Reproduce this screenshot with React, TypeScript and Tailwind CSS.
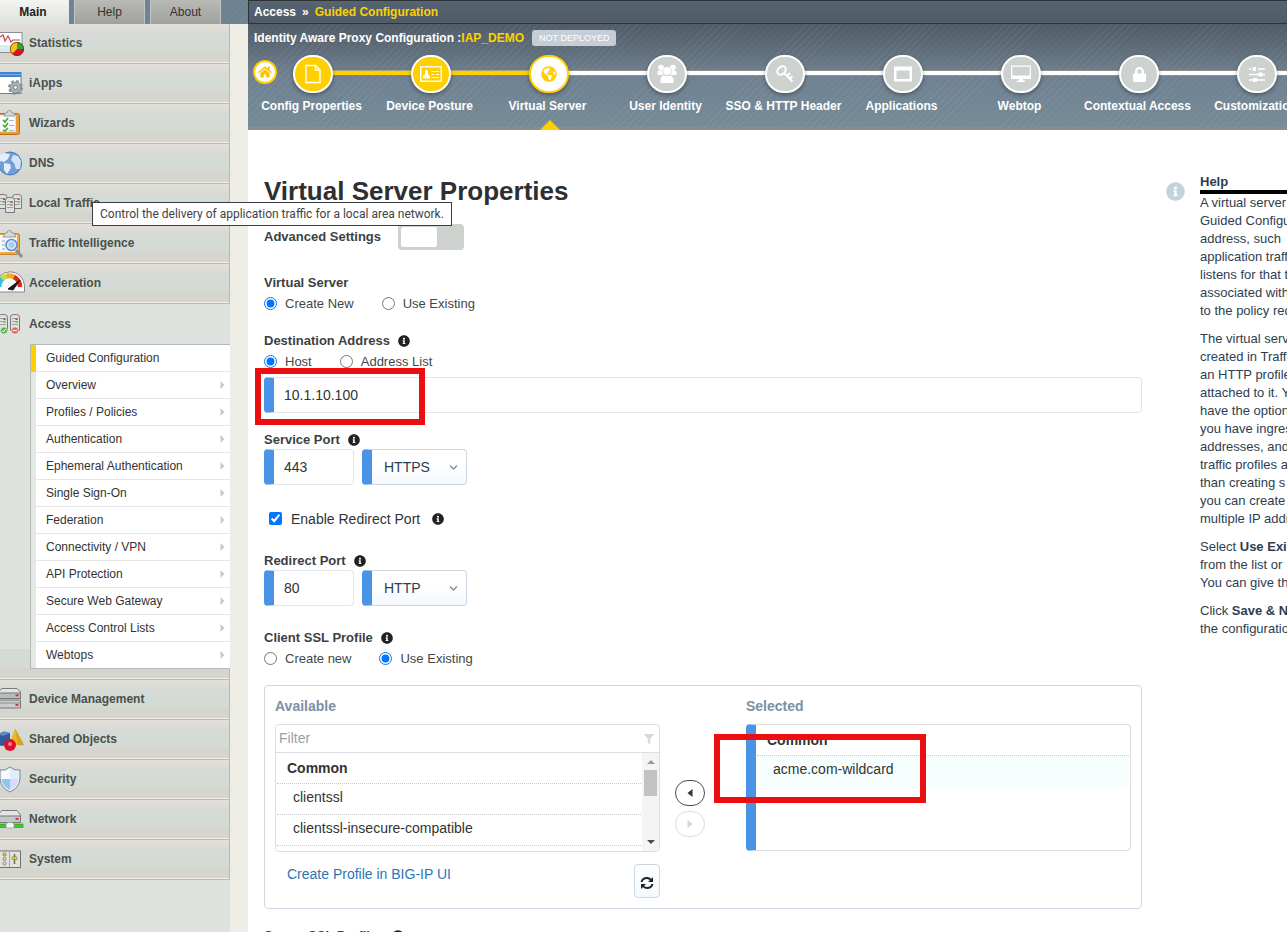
import { useState } from "react";
import type { ReactNode } from "react";
import {
  FaChevronDown,
  FaFilter,
  FaGlobeAmericas,
  FaHome,
  FaInfoCircle,
  FaLock,
} from "react-icons/fa";

/* ---------- Sidebar icons (25 x 40 artboard, one per row) ---------- */

function SideIcon({ children }: { children: ReactNode }) {
  return (
    <svg width="25" height="40" viewBox="0 0 25 40" className="shrink-0" aria-hidden="true">
      {children}
    </svg>
  );
}

const StatisticsIcon = () => (
  <SideIcon>
    <rect x="-2" y="9.5" width="24" height="20" fill="#fff" stroke="#8a8f94" />
    <rect x="-2" y="22" width="23" height="7" fill="#dce9f5" />
    <path d="M0 14 L3 12 L5 18 L8 13 L11 19 L13 17 H20" fill="none" stroke="#c8474b" strokeWidth="1.2" />
    <circle cx="17" cy="26" r="7" fill="#d8112c" />
    <path d="M17 26 V19 A7 7 0 0 1 24 26 Z" fill="#2fa834" />
    <path d="M17 26 L12 31 A7 7 0 0 1 17 19 Z" fill="#f5c518" />
    <circle cx="17" cy="26" r="6.6" fill="none" stroke="#6b2b22" strokeWidth=".7" />
  </SideIcon>
);

const IAppsIcon = () => (
  <SideIcon>
    <rect x="-2" y="9.5" width="23" height="21" fill="#fff" stroke="#6f7d8a" />
    <rect x="-2" y="9" width="23" height="5" fill="#3f83cc" />
    <rect x="-2" y="11" width="23" height="1" fill="#76aee4" />
    <circle cx="15.500" cy="24.500" r="6.500" fill="none" stroke="#8b9499" strokeWidth="2" strokeDasharray="2.6 2.500" />
    <circle cx="15.500" cy="24.500" r="5.500" fill="#a9b2b6" stroke="#7d868c" />
    <circle cx="15.500" cy="24.500" r="2" fill="#eef1f2" stroke="#727c82" />
  </SideIcon>
);

const WizardsIcon = () => (
  <SideIcon>
    <rect x="-3" y="10.500" width="22.500" height="21" rx="2" fill="#f09a2e" stroke="#b96d17" />
    <rect x="-1" y="12" width="17" height="17" fill="#f7f9fc" stroke="#c9b089" strokeWidth=".6" />
    <path d="M4 13 L5 10 H7 A2.500 2.500 0 0 1 12 10 H14 L15 13 Z" fill="#d6d9db" stroke="#85898c" strokeWidth=".8" />
    <path d="M3 17 l2 2 l3 -4 M3 22 l2 2 l3 -4 M3 27 l2 1 l3 -3" fill="none" stroke="#3fae2a" strokeWidth="1.700" />
    <path d="M9 17.500 h5 M9 22.500 h5 M9 27.500 h5" stroke="#a9b7cf" />
  </SideIcon>
);

const DnsIcon = () => (
  <SideIcon>
    <circle cx="10" cy="20.500" r="11.500" fill="#6f9ed8" stroke="#4a78b5" />
    <path d="M-2 13 L4 10 L10 11 L8 16 L4 19 L1 18 L-2 20 Z" fill="#e3eefb" />
    <path d="M4 20 L10 21 L11 25 L7 31 L4 27 Z" fill="#e3eefb" />
    <path d="M13 12 L18 13 L21 18 L20 26 L16 26 L14 20 L11 17 Z" fill="#d3e4f8" />
  </SideIcon>
);

const Tower = ({ x, y, h = 16 }: { x: number; y: number; h?: number }) => (
  <g>
    <path d={`M${x} ${y + 3} Q${x} ${y} ${x + 3} ${y} H${x + 6} Q${x + 9} ${y} ${x + 9} ${y + 3} V${y + h} H${x} Z`} fill="#dfe0df" stroke="#77797a" />
    <path d={`M${x + 1.5} ${y + 4} h6 M${x + 1.5} ${y + 7} h6 M${x + 1.5} ${y + 10} h6`} stroke="#a0a3a4" />
    <rect x={x + 5} y={y + 4} width="2" height="1.500" fill="#e02b2b" />
    <rect x={x + 5} y={y + 7} width="2" height="1.500" fill="#67c54b" />
  </g>
);

const LocalTrafficIcon = () => (
  <SideIcon>
    <Tower x={-2} y={11.5} h={14} />
    <Tower x={12.5} y={11.5} h={14} />
    <Tower x={5.5} y={14.5} h={15} />
  </SideIcon>
);

const TrafficIntelligenceIcon = () => (
  <SideIcon>
    <rect x="-3" y="10.500" width="22.500" height="21" rx="2" fill="#f4a840" stroke="#c58230" />
    <rect x="-1" y="12" width="18" height="17" fill="#f5f8fb" />
    <path d="M3 14 L5 10 H7 A2.500 2.500 0 0 1 12 10 H14 L16 14 Z" fill="#d6d9db" stroke="#85898c" strokeWidth=".8" />
    <path d="M2 18 h3 M2 22 h3 M2 26 h3" stroke="#7aa7d6" />
    <path d="M16 27 L22 34" stroke="#8d9194" strokeWidth="3" />
    <circle cx="11.500" cy="22" r="5.500" fill="#d6e8fa" stroke="#5b92d1" strokeWidth="1.600" />
    <circle cx="11.500" cy="22" r="3" fill="#a6cbf0" />
  </SideIcon>
);

const AccelerationIcon = () => (
  <SideIcon>
    <path d="M-4 29 V23 A14 14 0 0 1 24.500 23 V29 Z" fill="#fbfbfb" stroke="#85898c" />
    <path d="M-1 24 A11 11 0 0 1 3 15" fill="none" stroke="#35c1d8" strokeWidth="5" />
    <path d="M2 16 A11 11 0 0 1 8 13" fill="none" stroke="#c8d93c" strokeWidth="5" />
    <path d="M7 13 A11 11 0 0 1 15 14.500" fill="none" stroke="#f4a91f" strokeWidth="5" />
    <path d="M14 14 A11 11 0 0 1 20 24" fill="none" stroke="#e3261d" strokeWidth="4.500" />
    <path d="M8 26 L20 17 L13 27 Z" fill="#1a1a1a" stroke="#1a1a1a" />
  </SideIcon>
);

const AccessIcon = () => (
  <SideIcon>
    <Tower x={-1.5} y={10.5} h={16} />
    <Tower x={10.5} y={10.5} h={16} />
    <circle cx="4" cy="26.500" r="3.500" fill="#57b54c" stroke="#e9f6e6" strokeWidth=".6" />
    <path d="M2.500 26.500 l1 1.500 l2 -3" fill="none" stroke="#fff" />
    <circle cx="15" cy="26.500" r="3.500" fill="#ea5b50" stroke="#fbe7e5" strokeWidth=".6" />
    <path d="M13 26.500 h4" stroke="#fff" strokeWidth="1.300" />
  </SideIcon>
);

const DeviceIcon = () => (
  <SideIcon>
    <path d="M-3 14 L2 9.500 H17 L20.500 13 V19.500 H-3 Z" fill="#e3e4e4" stroke="#77797a" />
    <rect x="-3" y="14" width="23.500" height="5.500" fill="#b9bcbd" stroke="#77797a" />
    <path d="M-3 21 H20.500 V29 H-3 Z" fill="#c9cbcc" stroke="#77797a" />
    <path d="M-3 24 H20" stroke="#8d9091" />
    <rect x="15.500" y="15.500" width="3" height="1.800" fill="#e02b2b" />
    <rect x="15.500" y="25" width="3" height="1.800" fill="#e02b2b" />
  </SideIcon>
);

const SharedIcon = () => (
  <SideIcon>
    <path d="M-2 15 L4 12.500 L10 14 V25 L2 27 L-2 26 Z" fill="#31599f" />
    <path d="M-2 15 L4 12.500 L10 14 L3 17 Z" fill="#6288c6" />
    <path d="M15 9.500 L24 26 L9 26 Z" fill="#f0b72a" />
    <path d="M15 9.500 L24 26 L18 26.500 Z" fill="#dc9f20" />
    <circle cx="10" cy="26" r="6" fill="#d8112c" />
    <circle cx="10" cy="25" r="2" fill="#f0808f" />
  </SideIcon>
);

const SecurityIcon = () => (
  <SideIcon>
    <path d="M10 8 Q15 12 20 11 V20 Q19 29 10 33 Q1 29 0 20 V11 Q5 12 10 8 Z" fill="#dfeefb" stroke="#7f8890" />
    <path d="M10 10 Q5 13 1.500 12.500 V20 H10 Z" fill="#f6fbff" />
    <path d="M10 20 H1.500 Q3 27.500 10 31 Z" fill="#8fc7f0" />
    <path d="M10 20 H18.500 Q17 27.500 10 31 Z" fill="#d9daf8" />
  </SideIcon>
);

const NetworkIcon = () => (
  <SideIcon>
    <path d="M-3 17 L2 11.500 H17 L20.500 16 V23.500 H-3 Z" fill="#e3e4e4" stroke="#77797a" />
    <path d="M-3 17 H20.500 V23.500 H-3 Z" fill="#c3c6c7" stroke="#77797a" />
    <rect x="15.500" y="19" width="3" height="1.800" fill="#e02b2b" />
    <rect x="-1" y="25" width="24" height="3.500" fill="#45c62e" stroke="#2c8a1c" strokeWidth=".6" />
    <path d="M6 29 V25 L8 23.500 H12 L14 25 V29 Z" fill="#f2f3f3" stroke="#9a9d9e" strokeWidth=".7" />
  </SideIcon>
);

const SystemIcon = () => (
  <SideIcon>
    <rect x="-2" y="12" width="22.500" height="16.500" fill="#e2e3df" stroke="#6f7274" />
    <path d="M9.500 13 V28" stroke="#a4a6a4" />
    <circle cx="4.500" cy="15.500" r="1.600" fill="#f4d21f" stroke="#5d5d4a" strokeWidth=".7" />
    <circle cx="4.500" cy="20" r="1.600" fill="#ddd" stroke="#66696a" strokeWidth=".7" />
    <circle cx="4.500" cy="24.500" r="1.600" fill="#ddd" stroke="#66696a" strokeWidth=".7" />
    <path d="M14.500 15 V25" stroke="#66696a" strokeWidth="1.500" />
    <rect x="12" y="18" width="5" height="2.500" fill="#f4d21f" stroke="#8a7a1a" strokeWidth=".6" />
  </SideIcon>
);

/* ---------- Step icons ---------- */

const FileIcon = () => (
  <svg width="16" height="20" viewBox="0 0 16 20" fill="none" stroke="currentColor" strokeWidth="1.400">
    <path d="M1 1.500 H10.500 L15 6 V18.500 H1 Z M10.500 1.500 V6 H15" />
  </svg>
);

const CardIcon = () => (
  <svg width="22" height="16" viewBox="0 0 22 16" fill="none" stroke="currentColor">
    <rect x=".8" y=".8" width="20.400" height="14.400" strokeWidth="1.400" />
    <path d="M3 12.500 V9.500 L5 8.500 V5 L6.500 3.500 L8 5 V8.500 L10 9.500 V12.500 Z" fill="currentColor" stroke="none" />
    <path d="M11.500 5.500 H19 M11.500 8.500 H14 M15.500 8.500 H19 M11.500 11.500 H19" strokeWidth="1.200" />
  </svg>
);

const UsersIcon = () => (
  <svg width="20" height="20" viewBox="0 0 20 20" fill="currentColor">
    <circle cx="4" cy="3.500" r="2.800" />
    <circle cx="16" cy="3.500" r="2.800" />
    <path d="M.5 11 V8.500 Q.5 6.300 3 6.300 H5.400 Q5.200 9 6.500 11 Z" />
    <path d="M19.500 11 V8.500 Q19.500 6.300 17 6.300 H14.600 Q14.800 9 13.500 11 Z" />
    <circle cx="10" cy="7" r="3.900" />
    <path d="M3.500 19 Q3 11.800 7 11.200 Q10 13 13 11.200 Q17 11.800 16.500 19 Z" />
  </svg>
);

const KeyIcon = () => (
  <svg width="18" height="18" viewBox="0 0 18 18" fill="none" stroke="currentColor" strokeWidth="2">
    <ellipse cx="5.500" cy="5.500" rx="4.800" ry="3.600" transform="rotate(-45 5.500 5.500)" />
    <path d="M7.500 7.500 L16.500 16.500 M11 11 L14 8 M14 13.500 L16.500 11" />
  </svg>
);

const WindowIcon = () => (
  <svg width="18" height="16" viewBox="0 0 18 16" fill="currentColor">
    <path d="M0 .5 H18 V15.500 H0 Z M2.500 4.500 V13 H15.500 V4.500 Z" fillRule="evenodd" />
  </svg>
);

const MonitorIcon = () => (
  <svg width="20" height="18" viewBox="0 0 20 18" fill="currentColor">
    <path d="M0 .5 H20 V14 H0 Z M1.300 1.800 V10.500 H18.700 V1.800 Z" fillRule="evenodd" />
    <path d="M8 14 H12 V15.500 H14 V17 H6 V15.500 H8 Z" />
  </svg>
);

const SlidersIcon = () => (
  <svg width="16" height="16" viewBox="0 0 16 16" fill="currentColor">
    <path d="M0 2.300 H2 V3.700 H0 Z M9 2.300 H16 V3.700 H9 Z M0 7.800 H10 V9.200 H0 Z M13 7.800 H16 V9.200 H13 Z M0 13.300 H4 V14.700 H0 Z M8 13.300 H16 V14.700 H8 Z" />
    <path d="M3.500 1 H7 V5 H3.500 Z M9.500 6.500 H13.500 V10.500 H9.500 Z M4 12 H8 V16 H4 Z" />
  </svg>
);

const RefreshIcon = () => (
  <svg width="14" height="14" viewBox="0 0 14 14" fill="none" stroke="currentColor" strokeWidth="2">
    <path d="M1.500 6 Q2.500 2 7 2 Q9.500 2 11 4" />
    <path d="M12.500 8 Q11.500 12 7 12 Q4.500 12 3 10" />
    <path d="M13 1 V6 H8 Z M1 13 V8 H6 Z" fill="currentColor" stroke="none" />
  </svg>
);

/* ---------- Data ---------- */

const menuTop = [
  { label: "Statistics", icon: <StatisticsIcon /> },
  { label: "iApps", icon: <IAppsIcon /> },
  { label: "Wizards", icon: <WizardsIcon /> },
  { label: "DNS", icon: <DnsIcon /> },
  { label: "Local Traffic", icon: <LocalTrafficIcon />, tip: "Control the delivery of application traffic for a local area network." },
  { label: "Traffic Intelligence", icon: <TrafficIntelligenceIcon /> },
  { label: "Acceleration", icon: <AccelerationIcon /> },
];

const menuBottom = [
  { label: "Device Management", icon: <DeviceIcon /> },
  { label: "Shared Objects", icon: <SharedIcon /> },
  { label: "Security", icon: <SecurityIcon /> },
  { label: "Network", icon: <NetworkIcon /> },
  { label: "System", icon: <SystemIcon /> },
];

const accessItems = [
  "Guided Configuration",
  "Overview",
  "Profiles / Policies",
  "Authentication",
  "Ephemeral Authentication",
  "Single Sign-On",
  "Federation",
  "Connectivity / VPN",
  "API Protection",
  "Secure Web Gateway",
  "Access Control Lists",
  "Webtops",
];

type StepState = "done" | "current" | "todo";

const steps: { label: string; icon: ReactNode; state: StepState }[] = [
  { label: "Config Properties", icon: <FileIcon />, state: "done" },
  { label: "Device Posture", icon: <CardIcon />, state: "done" },
  { label: "Virtual Server", icon: <FaGlobeAmericas size={16} />, state: "current" },
  { label: "User Identity", icon: <UsersIcon />, state: "todo" },
  { label: "SSO & HTTP Header", icon: <KeyIcon />, state: "todo" },
  { label: "Applications", icon: <WindowIcon />, state: "todo" },
  { label: "Webtop", icon: <MonitorIcon />, state: "todo" },
  { label: "Contextual Access", icon: <FaLock size={15} />, state: "todo" },
  { label: "Customization", icon: <SlidersIcon />, state: "todo" },
];

const circleStyles: Record<StepState, string> = {
  done: "bg-[#ffd000] border-white text-white",
  current: "bg-white border-[#ffd000] text-[#ffd000]",
  todo: "bg-[#cdd2ce] border-white text-white",
};

const stripes =
  "bg-[repeating-linear-gradient(135deg,rgba(255,255,255,0.05)_0px,rgba(255,255,255,0.05)_1px,transparent_1px,transparent_5px)]";

/* ---------- Sidebar ---------- */

function MenuRow({ label, icon, tip }: { label: string; icon: ReactNode; tip?: string }) {
  return (
    <li className="relative border-r border-b border-[#b6bab6]">
      <a
        href="#"
        className="flex h-[39px] items-center gap-1 border-b border-[#f2f2ec] bg-[linear-gradient(#e0dfda_0px,#dddad5_9px,#d4dad6_9px,#d4dad6_28px,#d6d5ce_28px,#d5d4cc_39px)] text-[12px] font-bold text-[#4b504c]"
      >
        {icon}
        {label}
      </a>
      {tip && (
        <span
          role="tooltip"
          className="absolute top-[18px] left-[92px] z-20 h-6 border border-[#3b3b43] bg-white px-[7px] font-[Roboto,sans-serif] text-[12px] leading-[22px] whitespace-nowrap text-[#3f3f45]"
        >
          {tip}
        </span>
      )}
    </li>
  );
}

function Sidebar() {
  return (
    <aside className="flex w-[248px] shrink-0 flex-col">
      <div className={`flex h-6 gap-[5px] bg-[#6e8291] text-[12px] ${stripes}`}>
        <button className="w-[69px] bg-linear-to-b from-[#f4f4f0] to-[#dde2de] pr-[3px] font-bold text-[#222]">Main</button>
        <button className="w-[71px] border-x border-[#c3c5c0] bg-linear-to-b from-[#b9bab5] to-[#9fa19d] text-[#333]">Help</button>
        <button className="w-[71px] border-x border-[#c3c5c0] bg-linear-to-b from-[#b9bab5] to-[#9fa19d] text-[#333]">About</button>
      </div>
      <div className="flex-1 bg-[#eeeee6] pr-[18px]">
        <nav className="h-full bg-[#dde2de]">
          <ul>
            {menuTop.map((m) => (
              <MenuRow key={m.label} {...m} />
            ))}
            <li>
              <a href="#" className="flex h-10 items-center gap-1 text-[12px] font-bold text-[#4b504c]">
                <AccessIcon />
                Access
              </a>
              <div className="border-r border-b border-[#b6bab6] bg-[linear-gradient(to_top,#f2f2ec_0px,#f2f2ec_1px,#d5d4cc_1px,#d6d5ce_11px,#d4dad6_11px,#d4dad6_30px,#dde2de_30px)] pb-[10px] pl-[30px]">
                <ul className="-mr-px border-t border-b border-l border-[#b6bab6] bg-white">
                  {accessItems.map((item, i) => (
                    <li
                      key={item}
                      className={
                        i === 0
                          ? "border-l-[5px] border-[#ffd000]"
                          : "border-l-[5px] border-[#e3e8e4]"
                      }
                    >
                      <a
                        href="#"
                        className={
                          i === accessItems.length - 1
                            ? "flex h-[26px] items-center justify-between pr-[5px] pl-[10px] text-[12px] text-[#333]"
                            : "flex h-[27px] items-center justify-between border-b border-[#e4e5e4] pr-[5px] pl-[10px] text-[12px] text-[#333]"
                        }
                      >
                        {item}
                        {i > 0 && (
                          <svg width="5" height="8" viewBox="0 0 5 8" aria-hidden="true">
                            <path d="M.5 0 L4.500 4 L.5 8 Z" fill="#c9cbca" />
                          </svg>
                        )}
                      </a>
                    </li>
                  ))}
                </ul>
              </div>
            </li>
            {menuBottom.map((m) => (
              <MenuRow key={m.label} {...m} />
            ))}
          </ul>
        </nav>
      </div>
    </aside>
  );
}

/* ---------- Header ---------- */

function Header() {
  return (
    <header className="overflow-hidden font-bold text-white">
      <div className="flex h-6 items-center gap-[6px] border border-r-0 border-[#2f3338] bg-linear-to-b from-[#566370] to-[#505c68] px-[5px] text-[12px]">
        <a href="#">Access</a>
        <span>»</span>
        <a href="#" className="text-[#ffd000]">Guided Configuration</a>
      </div>
      <div className="border-b-[3px] border-[#8c8c8c] bg-linear-to-b from-[#505b65] via-[#6f8190] via-50% to-[#768a98]">
        <div className={`relative h-[103px] pl-[6px] ${stripes}`}>
          <div className="flex h-7 items-center text-[12px]">
            <span>Identity Aware Proxy Configuration :</span>
            <span className="text-[#ffd000]">IAP_DEMO</span>
            <span className="ml-2 h-4 rounded-[3px] bg-[#c5cdd6] px-[7px] text-[9px] leading-4 font-normal">NOT DEPLOYED</span>
          </div>
          <a
            href="#"
            aria-label="Home"
            className="absolute top-9 left-[5px] flex size-6 items-center justify-center rounded-full border-2 border-[#ffd000] bg-white text-[#ffc400]"
          >
            <FaHome size={14} />
          </a>
          <ol className="flex">
            {steps.map((s, i) => (
              <li key={s.label} className="relative flex h-[75px] w-[118px] shrink-0 flex-col items-center pt-[3px]">
                <span
                  className={
                    s.state === "done"
                      ? "absolute top-[18px] left-[59px] h-[5px] w-[118px] border-t border-[#a9a179] bg-[#ffd000]"
                      : "absolute top-[18px] left-[59px] h-[6px] w-[118px] border-y border-[#8d8f90] bg-white"
                  }
                />
                <button
                  aria-label={s.label}
                  className={`relative z-10 flex h-[38px] w-10 shrink-0 items-center justify-center rounded-full border-2 shadow-[0_2px_4px_rgba(0,0,0,0.35)] ${circleStyles[s.state]}`}
                >
                  {s.icon}
                </button>
                <span className="mt-[5px] pr-[3px] text-[12px] leading-4 whitespace-nowrap">{s.label}</span>
                {i === 2 && (
                  <svg className="absolute -bottom-[3px] left-[50px]" width="20" height="10" viewBox="0 0 20 10" aria-hidden="true">
                    <path d="M10 0 L20 10 H0 Z" fill="#ffd000" />
                  </svg>
                )}
              </li>
            ))}
          </ol>
        </div>
      </div>
    </header>
  );
}

/* ---------- Form parts ---------- */

function FieldTitle({ children, info }: { children: ReactNode; info?: boolean }) {
  return (
    <div className="flex h-[18px] items-center gap-2 text-[13px] font-bold text-[#3c3f42]">
      {children}
      {info && <FaInfoCircle size={12} className="text-[#222]" />}
    </div>
  );
}

function RadioRow({ name, options, initial }: { name: string; options: string[]; initial: number }) {
  const [value, setValue] = useState(initial);
  return (
    <div className="mt-0.5 flex h-5 items-center gap-7 text-[13px] text-[#44474a]">
      {options.map((o, i) => (
        <label key={o} className="flex items-center gap-2">
          <input
            type="radio"
            name={name}
            checked={value === i}
            onChange={() => setValue(i)}
            className="mb-0.5 size-[13px] accent-[#0075ff]"
          />
          {o}
        </label>
      ))}
    </div>
  );
}

function PortRow({ id, port, protocol }: { id: string; port: string; protocol: string }) {
  return (
    <div className="flex gap-2">
      <input
        id={id}
        defaultValue={port}
        className="h-9 w-[90px] rounded border border-l-[10px] border-[#dfe6ef] border-l-[#4a94e8] bg-white pl-[10px] text-[14px] text-[#333]"
      />
      <div className="relative">
        <select
          aria-label="Protocol"
          defaultValue={protocol}
          className="h-9 w-[105px] appearance-none rounded border border-l-[10px] border-[#cdd7e2] border-l-[#4a94e8] bg-linear-to-b from-white from-40% to-[#f4f9fd] pl-3 text-[14px] text-[#2c3e50]"
        >
          <option>HTTPS</option>
          <option>HTTP</option>
        </select>
        <FaChevronDown size={9} className="pointer-events-none absolute top-[14px] right-[9px] text-[#8a8d90]" />
      </div>
    </div>
  );
}

function SslProfileBox() {
  return (
    <div className="mt-4 flex items-start rounded border border-[#cfd8e2] px-[10px] pt-[11px] pb-[10px] text-[14px]">
      <section className="min-w-0 flex-1">
        <h3 className="leading-[18px] font-bold text-[#7c8fa5]">Available</h3>
        <div className="mt-[9px] h-32 overflow-hidden rounded border border-[#dcdfe2] text-[#333]">
          <div className="flex h-7 items-center border-b border-[#dcdfe2] pr-[5px] pl-[3px]">
            <input
              aria-label="Filter"
              placeholder="Filter"
              className="min-w-0 flex-1 bg-transparent text-[14px] outline-none placeholder:text-[#9aa0a6]"
            />
            <FaFilter size={10} className="text-[#d5dad8]" />
          </div>
          <div className="flex h-[98px]">
            <ul className="min-w-0 flex-1 pr-px pl-px">
              <li className="h-[31px] border-b border-dotted border-[#c6cbd0] pl-[10px] leading-[30px] font-bold">Common</li>
              <li className="h-[31px] border-b border-dotted border-[#c6cbd0] pl-4 leading-[26px]">clientssl</li>
              <li className="h-[31px] border-b border-dotted border-[#c6cbd0] pl-4 leading-[26px]">clientssl-insecure-compatible</li>
            </ul>
            <div className="flex w-[17px] flex-col items-center bg-[#f4f4f4] pt-[7px] pb-[7px]" aria-hidden="true">
              <svg width="8" height="4" viewBox="0 0 8 4"><path d="M4 0 L8 4 H0 Z" fill="#9b9b9b" /></svg>
              <div className="mt-1.5 h-[26px] w-[13px] bg-[#c2c2c2]" />
              <svg className="mt-auto" width="8" height="4" viewBox="0 0 8 4"><path d="M4 4 L8 0 H0 Z" fill="#4a4a4a" /></svg>
            </div>
          </div>
        </div>
        <div className="mt-3 flex items-start justify-between pl-3">
          <a href="#" className="leading-5 text-[#2a76b5]">Create Profile in BIG-IP UI</a>
          <button
            aria-label="Refresh"
            className="flex h-[34px] w-[26px] items-center justify-center rounded border border-[#cdd7e2] bg-linear-to-b from-white to-[#f4f9fd] pt-1 text-[#222]"
          >
            <RefreshIcon />
          </button>
        </div>
      </section>
      <div className="mt-[83px] mr-[41px] ml-[15px] flex flex-col gap-[5px]">
        <button aria-label="Move to available" className="flex h-[26px] w-[30px] items-center justify-center rounded-full border border-[#4a4a4a]">
          <svg width="6" height="8" viewBox="0 0 6 8"><path d="M5.500 0 V8 L.5 4 Z" fill="#333" /></svg>
        </button>
        <button aria-label="Move to selected" className="flex h-[26px] w-[30px] items-center justify-center rounded-full border border-[#d6dde5]">
          <svg width="6" height="8" viewBox="0 0 6 8"><path d="M.5 0 V8 L5.500 4 Z" fill="#cdd6df" /></svg>
        </button>
      </div>
      <section className="min-w-0 flex-1">
        <h3 className="leading-[18px] font-bold text-[#7c8fa5]">Selected</h3>
        <div className="relative mt-[9px]">
          <ul className="h-[127px] rounded border border-l-[10px] border-[#dcdfe2] border-l-[#4a94e8] px-px text-[#333]">
            <li className="h-[31px] border-b border-dotted border-[#c6cbd0] pl-[10px] leading-[30px] font-bold">Common</li>
            <li className="h-[31px] bg-[#f6fefe] pl-4 leading-[26px]">acme.com-wildcard</li>
          </ul>
          <div className="pointer-events-none absolute top-[10px] -left-8 h-[69px] w-[212px] border-[6px] border-[#ec0f0f]" />
        </div>
      </section>
    </div>
  );
}

function HelpPanel() {
  const paragraphs = [
    ["A virtual server", "Guided Configuration", "address, such", "application traffic", "listens for that t", "associated with", "to the policy request"],
    ["The virtual server", "created in Traffic", "an HTTP profile", "attached to it. You", "have the option", "you have ingress", "addresses, and", "traffic profiles and", "than creating s", "you can create", "multiple IP addresses"],
  ];
  return (
    <aside className="flex w-[121px] shrink-0 gap-[15px] overflow-hidden pt-11 text-[13px] leading-[18px] whitespace-nowrap text-[#2d3e50]">
      <FaInfoCircle size={19} className="mt-2 shrink-0 text-[#c2d3dc]" />
      <div className="min-w-0 flex-1">
        <h2 className="h-5 border-b-4 border-black leading-4 font-bold">Help</h2>
        {paragraphs.map((lines) => (
          <p key={lines[0]} className="mb-[10px]">
            {lines.map((l) => (
              <span key={l} className="block">{l}</span>
            ))}
          </p>
        ))}
        <p className="mb-[10px]">
          Select <b>Use Existing</b>
          <br />
          from the list or
          <br />
          You can give the
        </p>
        <p>
          Click <b>Save &amp; Next</b>
          <br />
          the configuration
        </p>
      </div>
    </aside>
  );
}

export default function App() {
  const [redirect, setRedirect] = useState(true);
  const [advanced, setAdvanced] = useState(false);
  return (
    <div className="flex h-screen overflow-hidden bg-white font-['Liberation_Sans',Arial,sans-serif] text-[#333]">
      <Sidebar />
      <div className="min-w-0 flex-1">
        <Header />
        <div className="flex gap-6 pl-4">
          <main className="min-w-0 flex-1 pt-[45px]">
            <h1 className="text-[26px] leading-8 font-bold text-[#2d2f31]">Virtual Server Properties</h1>
            <div className="mt-[17px] flex h-[26px] items-center gap-[17px] text-[13px] font-bold text-[#3c3f42]">
              <span id="advanced">Advanced Settings</span>
              <button
                role="switch"
                aria-checked={advanced}
                aria-labelledby="advanced"
                onClick={() => setAdvanced(!advanced)}
                className={advanced ? "flex h-[26px] w-[66px] justify-end rounded bg-[#4a94e8] p-[3px]" : "flex h-[26px] w-[66px] rounded bg-[#cdd2ce] p-[3px]"}
              >
                <span className="h-5 w-9 rounded-[2px] bg-white" />
              </button>
            </div>

            <div className="mt-6">
              <FieldTitle>Virtual Server</FieldTitle>
              <RadioRow name="vs" options={["Create New", "Use Existing"]} initial={0} />
            </div>

            <div className="mt-[18px]">
              <FieldTitle info>
                <label htmlFor="dest">Destination Address</label>
              </FieldTitle>
              <RadioRow name="dest-type" options={["Host", "Address List"]} initial={0} />
              <div className="relative mt-[5px]">
                <input
                  id="dest"
                  defaultValue="10.1.10.100"
                  className="block h-9 w-full rounded border border-l-[10px] border-[#dfe6ef] border-l-[#4a94e8] pl-[10px] text-[14px] text-[#333]"
                />
                <div className="pointer-events-none absolute -top-[9px] -left-[9px] h-[57px] w-[170px] border-[6px] border-[#ec0f0f]" />
              </div>
            </div>

            <div className="mt-[18px]">
              <FieldTitle info>
                <label htmlFor="service-port">Service Port</label>
              </FieldTitle>
              <PortRow id="service-port" port="443" protocol="HTTPS" />
            </div>

            <div className="mt-6 flex h-5 items-center gap-3 pl-[5px] text-[14px]">
              <label className="flex items-center gap-[9px]">
                <input
                  type="checkbox"
                  checked={redirect}
                  onChange={() => setRedirect(!redirect)}
                  className="mb-0.5 size-[13px] accent-[#0075ff]"
                />
                Enable Redirect Port
              </label>
              <FaInfoCircle size={12} className="text-[#222]" />
            </div>

            <div className="mt-[23px]">
              <FieldTitle info>
                <label htmlFor="redirect-port">Redirect Port</label>
              </FieldTitle>
              <PortRow id="redirect-port" port="80" protocol="HTTP" />
            </div>

            <div className="mt-[23px]">
              <FieldTitle info>Client SSL Profile</FieldTitle>
              <RadioRow name="client-ssl" options={["Create new", "Use Existing"]} initial={1} />
              <SslProfileBox />
            </div>

            <div className="mt-[18px]">
              <FieldTitle info>Server SSL Profiles</FieldTitle>
            </div>
          </main>
          <HelpPanel />
        </div>
      </div>
    </div>
  );
}
